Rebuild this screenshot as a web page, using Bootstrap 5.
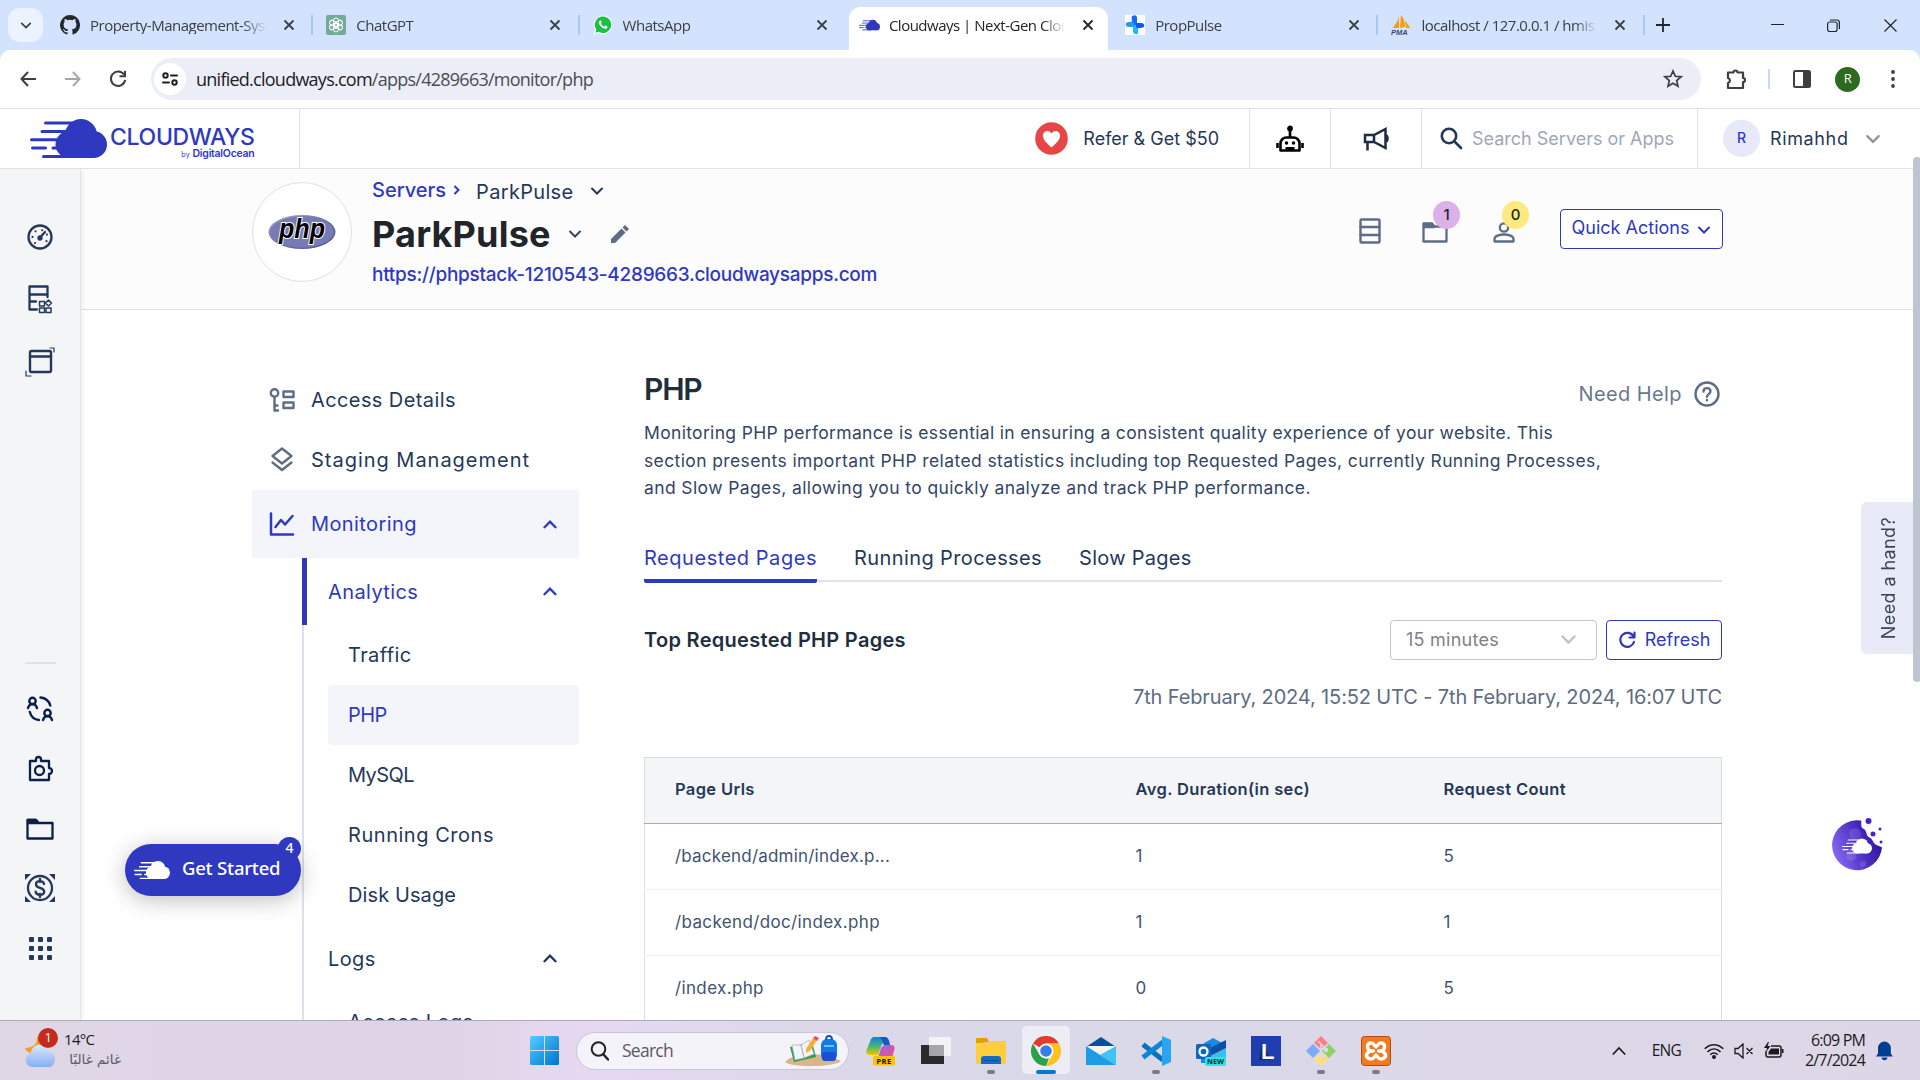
<!DOCTYPE html>
<html lang="en">
<head>
<meta charset="utf-8">
<title>Cloudways | Next-Gen Cloud Hosting</title>
<link href="https://cdn.jsdelivr.net/npm/bootstrap@5.3.0/dist/css/bootstrap.min.css" rel="stylesheet">
<style>
:root{--cw:#2f39bf;--navy:#253858;--slate:#5e6c8a;--line:#dfe1e6}
html,body{height:1080px;width:1920px;overflow:hidden}
body{font-family:Inter,"Noto Sans",sans-serif;color:var(--navy);background:#fff;letter-spacing:.02em;font-size:20px;line-height:1.2}
svg{display:block;flex:none}
.ic{fill:none;stroke:currentColor;stroke-width:2;stroke-linecap:round;stroke-linejoin:round}
.sys{font-family:"Open Sans","Noto Sans",sans-serif;letter-spacing:-.033em}
.nw{white-space:nowrap}
/* browser chrome */
.tabstrip{height:50px;background:#d3e2fd;color:#3c4043;font-size:15px}
.tab-menu{width:35px;height:34px;border-radius:12px;background:#edf3fe;margin:8px 3px 0 8px}
.btab{width:266.3px;padding-left:14px;height:50px;position:relative}
.btab:not(.active):not(.nosep)::after{content:"";position:absolute;right:-1px;top:15px;width:2px;height:20px;background:#a8c7fa}
.btab .ttl{width:178px;margin-left:10px;overflow:hidden;-webkit-mask-image:linear-gradient(90deg,#000 86%,transparent 99%);mask-image:linear-gradient(90deg,#000 86%,transparent 99%)}
.btab.active::before{content:"";position:absolute;inset:7px 3px 0 4px;background:#fff;border-radius:12px 12px 0 0;z-index:0}
.btab.active>*{position:relative}
.btab .x{margin-left:15px}
.toolbar{height:59px;border-bottom:1px solid #dcdfe6;background:#fff;color:#3c4043;border-radius:10px 10px 0 0}
.omni{height:42px;width:1550px;border-radius:21px;background:#ebeef7;padding-left:3px;padding-right:18px}
.site{width:32px;height:32px;border-radius:50%;background:#fff}
.url{font-size:18px;margin-left:10px;color:#4a4d51;letter-spacing:-.0415em;padding-top:1px}
.url b{font-weight:400;color:#1f2023}
/* app header */
.apphead{height:60px;border-bottom:1px solid var(--line);padding-right:6px}
.apphead>div{border-right:1px solid var(--line);height:59px}
.brand{width:300px;padding-left:30px;color:var(--cw)}
.brand .nm{font-size:23px;font-weight:500;line-height:24px;letter-spacing:-.014em}
.brand .by{font-size:7px;line-height:10px}
.brand .by b{font-size:10.5px;font-weight:600;letter-spacing:-.025em}
.t18{font-size:18px;letter-spacing:0}
/* body */
.appbody{height:851px;overflow:hidden}
.rail{width:81px;margin-right:-1px;background:#f3f5f7;border-right:1px solid #e1e4e8;box-shadow:2px 0 4px rgba(0,0,0,.06);z-index:2}
.rail>div{width:80px;display:flex;justify-content:center;align-items:center}
.subhead{height:141px;background:#fcfcfc;border-bottom:1px solid #dcdfe4;padding-left:172px}
.phpc{width:100px;height:100px;border:1px solid #e0e0e8;border-radius:50%;background:#fff;margin-top:13px}
.crumb-row{height:24px}
.app-name{font-size:36px;font-weight:700;line-height:40px;color:#212529;letter-spacing:.005em}
.cblue{color:var(--cw)}
.app-url{font-size:19px;font-weight:450;letter-spacing:-.0145em;line-height:24px}
.bub{position:absolute;width:27px;height:28px;border-radius:50%;font-size:15px;font-weight:500;color:#212529;letter-spacing:0}
.cbtn{border:1px solid var(--cw);color:var(--cw);border-radius:4px;font-size:18px;letter-spacing:0;padding:0;height:40px;background:#fff}
.side{width:327px;margin-left:172px;padding-top:60px;color:#253858}
.side .mi{height:60px;padding-left:17px}
.side .mi .lb{margin-left:16px}
.side .mon{height:68px;background:#f4f5fb;border-radius:4px;color:var(--cw)}
.tree{margin-left:50px;border-left:2px solid #dfe0ea;padding-left:24px;width:277px}
.tree .hd{height:67px;padding-right:21px}
.tree .lf{height:60px;padding-left:20px;display:flex;align-items:center;border-radius:4px}
.tree .hd.on{color:var(--cw);position:relative}
.tree .hd.on::before{content:"";position:absolute;left:-26px;top:0;width:5px;height:67px;background:var(--cw)}
.main{width:1078px;margin-left:65px;padding-top:60px}
.h-php{font-size:30px;font-weight:600;line-height:38px;color:#1f2d3d;letter-spacing:-.04em}
.desc{font-size:17.5px;line-height:27.6px;color:#344563;letter-spacing:.022em;margin-top:11px}
.desc .l1{letter-spacing:.0188em}
.mtabs{border-bottom:2px solid #e2e3ea;height:44px;margin-top:36px;gap:37px;letter-spacing:.027em}
.mtabs>div{height:45px;padding-top:8px}
.mtabs .on{color:var(--cw);border-bottom:4px solid var(--cw);border-radius:2px}
.sel{width:207px;height:40px;border:1px solid #c1c7d0;border-radius:4px;font-size:18px;color:#7e8287;padding:0 19px 0 15px;letter-spacing:.014em}
.daterange{color:#5e6c84;letter-spacing:-.0066em;margin-top:25px}
.ptable{border:1px solid #d9dce2;border-bottom:0;margin-top:48px;table-layout:fixed;letter-spacing:.018em}
.ptable th{height:66px;padding:0 0 0 30px;background:#f3f5f7!important;font-size:16.5px;font-weight:600;color:var(--navy);border-bottom:1px solid #a5adba;vertical-align:middle}
.ptable td{height:66px;padding:0 0 0 30px;font-size:17px;color:#42526e;border-bottom:1px solid #eff0f3;vertical-align:middle}
.ptable th+th,.ptable td+td{padding-left:0}
.scrollb{position:absolute;left:1913px;top:109px;width:7px;height:911px;background:#fff}
.scrollb::after{content:"";position:absolute;top:48px;left:0;width:8px;height:525px;border-radius:4px;background:#bfc5d0}
.hand{position:absolute;left:1861px;top:502px;width:52px;height:152px;background:#e8eaf7;border-radius:6px 0 0 6px;font-size:18px;color:#3b4757;padding-left:4px}
.hand span{writing-mode:vertical-rl;transform:rotate(180deg)}
.gs{position:absolute;left:125px;top:844px;width:176px;height:52px;border-radius:26px;background:var(--cw);color:#fff;box-shadow:0 4px 22px rgba(0,0,0,.25);font-family:"Noto Sans",sans-serif;font-weight:500;padding-left:9px;z-index:5;font-size:18.5px;letter-spacing:-.012em}
.gs .n{position:absolute;right:0;top:-7px;width:23px;height:23px;border-radius:50%;background:var(--cw);font-size:14px}
.cookie{position:absolute;left:1832px;top:817px}
/* taskbar */
.taskbar{height:60px;border-top:1px solid #aeacbb;background:linear-gradient(90deg,#dfd6e6 0,#dfd4e6 440px,#e7d8f2 590px,#dcd8ea 800px,#d9d9e8 1100px,#dcd8e8 1500px,#ddd6e6 1920px);color:#1b1b1f}
.tk{width:55px;height:59px;display:flex;align-items:center;justify-content:center;position:relative}
.tk.run::after{content:"";position:absolute;bottom:6px;width:8px;height:4px;border-radius:2px;background:#7c7a83}
.tk.cur::after{content:"";position:absolute;bottom:6px;width:20px;height:4px;border-radius:2px;background:#0078d4}
.tk.cur::before{content:"";position:absolute;inset:5px 3px 6px 4px;border-radius:5px;background:#eeedf6}
.tk svg{position:relative}
.sbox{width:273px;height:38px;border-radius:19px;background:#f5f3fa;border:1px solid #cdc5d8;padding:0 6px 0 13px;margin-left:17px;font-size:17.5px;color:#5b5960}
.clock{font-size:16px;line-height:20px;letter-spacing:-.052em;text-align:right;padding-bottom:2px}
.wnum{position:absolute;left:14px;top:-4px;width:20px;height:20px;border-radius:50%;background:#c42b1c;color:#fff;font-size:13px}
</style>
<script src="https://cdn.jsdelivr.net/npm/bootstrap@5.3.0/dist/js/bootstrap.bundle.min.js"></script>
</head>
<body>
<svg width="0" height="0" class="position-absolute">
<defs>
<symbol id="cloud" viewBox="0 0 77 39"><g fill="currentColor"><circle cx="51" cy="16" r="16"/><circle cx="63.500" cy="25.500" r="13.500"/><circle cx="39" cy="25.500" r="13.500"/><path d="M35 18l10-6 15 10 3 17H39z"/></g><path d="M15.500 4H44M12 12.400h30M1.500 20.700h30M2.500 29h13M23 29h8M13.500 37.400H40" stroke="currentColor" stroke-width="3" stroke-linecap="round" fill="none"/></symbol>
<symbol id="x" viewBox="0 0 12 12"><path d="M1.500 1.500l9 9M10.500 1.500l-9 9" stroke="currentColor" stroke-width="1.800"/></symbol>
<symbol id="dn" viewBox="0 0 14 10"><path d="M2 2.500l5 5 5-5" fill="none" stroke="currentColor" stroke-width="2" stroke-linecap="round"/></symbol>
<symbol id="up" viewBox="0 0 14 10"><path d="M2 7.500l5-5 5 5" fill="none" stroke="currentColor" stroke-width="2.200" stroke-linecap="round"/></symbol>
</defs>
</svg>

<div class="tabstrip d-flex sys">
  <div class="tab-menu d-flex align-items-center justify-content-center"><svg width="12" height="9"><use href="#dn"/></svg></div>
  <div class="btab d-flex align-items-center nw"><svg width="20" height="20" viewBox="0 0 16 16"><path fill="#24292f" d="M8 0a8 8 0 0 0-2.530 15.590c.4.070.55-.17.55-.38l-.01-1.490c-2.010.37-2.530-.49-2.690-.94-.09-.23-.48-.94-.82-1.130-.28-.15-.68-.52-.01-.53.63-.01 1.080.58 1.230.82.72 1.210 1.870.87 2.330.66.07-.52.28-.87.51-1.070-1.780-.2-3.640-.89-3.640-3.950 0-.87.31-1.590.82-2.150-.08-.2-.36-1.020.08-2.120 0 0 .67-.21 2.200.82a7.600 7.600 0 0 1 4 0c1.530-1.040 2.200-.82 2.200-.82.44 1.100.16 1.920.08 2.120.51.56.82 1.270.82 2.150 0 3.070-1.870 3.750-3.650 3.950.29.25.54.73.54 1.480l-.01 2.200c0 .21.150.46.55.38A8 8 0 0 0 8 0"/></svg><div class="ttl">Property-Management-Sys</div><svg class="x" width="12" height="12"><use href="#x"/></svg></div>
  <div class="btab d-flex align-items-center nw"><svg width="20" height="20" viewBox="0 0 20 20"><rect width="20" height="20" rx="2" fill="#74aa9c"/><g fill="none" stroke="#fff" stroke-width="1"><rect x="7.500" y="3" width="5" height="8.500" rx="2.500"/><rect x="7.500" y="3" width="5" height="8.500" rx="2.500" transform="rotate(60 10 10)"/><rect x="7.500" y="3" width="5" height="8.500" rx="2.500" transform="rotate(120 10 10)"/><rect x="7.500" y="3" width="5" height="8.500" rx="2.500" transform="rotate(180 10 10)"/><rect x="7.500" y="3" width="5" height="8.500" rx="2.500" transform="rotate(240 10 10)"/><rect x="7.500" y="3" width="5" height="8.500" rx="2.500" transform="rotate(300 10 10)"/></g></svg><div class="ttl">ChatGPT</div><svg class="x" width="12" height="12"><use href="#x"/></svg></div>
  <div class="btab nosep d-flex align-items-center nw"><svg width="20" height="20" viewBox="0 0 20 20"><path d="M10 .5a9.300 9.300 0 0 1 0 18.700 9.600 9.600 0 0 1-4.400-1.100L.8 19.400l1.300-4.700A9.300 9.300 0 0 1 10 .5z" fill="#fff"/><path d="M10 1.600a8.200 8.200 0 1 1-4.300 15.200l-3.300.9.900-3.200A8.200 8.200 0 0 1 10 1.600z" fill="#1bc143"/><path d="M6.900 5.400c.5-.3 1-.1 1.200.4l.6 1.400c.1.500-.9 1.100-.7 1.500.8 1.500 1.800 2.300 3.200 2.900.4.100.9-1.100 1.400-1l1.700.9c.6.400-.2 1.800-1 2.200-2.400 1-7.500-3.200-7.600-6.100 0-.9.500-1.800 1.200-2.200z" fill="#fff"/></svg><div class="ttl">WhatsApp</div><svg class="x" width="12" height="12"><use href="#x"/></svg></div>
  <div class="btab active d-flex align-items-center nw"><svg width="21" height="12" style="color:var(--cw)"><use href="#cloud"/></svg><div class="ttl text-dark" style="margin-left:9px">Cloudways | Next-Gen Clou</div><svg class="x text-dark" width="12" height="12"><use href="#x"/></svg></div>
  <div class="btab d-flex align-items-center nw"><svg width="20" height="20" viewBox="0 0 20 20"><path fill="#fff" d="M0 0h20v20H0z"/><path fill="#1668f5" d="M7 1q4-2 5 1v8H8Q6 5 7 1z"/><path fill="#22b6fb" d="M8 10h4q2 4 1 9-4 1-5-2z"/><path fill="#1e9dfa" d="M1 8q4-2 8-.5V12H4q-4 0-3-4z"/><path fill="#1558e8" d="M11 8h6q3 1 2 4-4 2-8 .5z"/></svg><div class="ttl">PropPulse</div><svg class="x" width="12" height="12"><use href="#x"/></svg></div>
  <div class="btab d-flex align-items-center nw"><svg width="20" height="20" viewBox="0 0 20 20"><path fill="#f89c0e" d="M8 1v12H2C4 9 7 7 8 1zM10 0c3 3 4 8 4 12l-5 1zM14 6c2 2 4 4 5 7h-4z"/><text x="0" y="19.500" font-size="7.500" font-weight="700" font-style="italic" fill="#444477" letter-spacing="0" font-family="Liberation Sans">PMA</text></svg><div class="ttl">localhost / 127.0.0.1 / hmis</div><svg class="x" width="12" height="12"><use href="#x"/></svg></div>
  <div class="d-flex align-items-center text-dark flex-grow-1" style="padding-left:12px">
    <svg width="14" height="14" stroke="currentColor" stroke-width="1.800"><path d="M7 0v14M0 7h14"/></svg>
    <svg width="13" height="14" class="ms-auto" stroke="currentColor"><path d="M0 6.500h13"/></svg>
    <svg width="13" height="13" style="margin-left:43px" fill="none" stroke="currentColor" stroke-width="1.200"><rect x=".6" y="3" width="9.500" height="9.500" rx="2"/><path d="M3 1h7a2.400 2.400 0 0 1 2.400 2.400V10"/></svg>
    <svg width="13" height="13" style="margin:0 23px 0 44px" stroke="currentColor" stroke-width="1.200"><path d="M.5.500l12 12M12.500.500l-12 12"/></svg>
  </div>
</div>
<div style="background:#d3e2fd"><div class="toolbar d-flex align-items-center">
  <svg width="16" height="16" style="margin-left:20px" fill="none" stroke="currentColor" stroke-width="2"><path d="M16 8H1.500M8 1L1.500 8 8 15"/></svg>
  <svg width="16" height="16" style="margin-left:29px" fill="none" stroke="#a5a8ab" stroke-width="2"><path d="M0 8h14.500M8 1l6.500 7L8 15"/></svg>
  <svg width="18" height="18" style="margin-left:28px" fill="none" stroke="currentColor" stroke-width="2"><path d="M15 4.500A7.200 7.200 0 1 0 16.200 10M16 .8v5.500h-5.500"/></svg>
  <div class="omni d-flex align-items-center sys" style="margin-left:24px">
    <div class="site d-flex align-items-center justify-content-center"><svg width="16" height="14" class="ic" style="color:#1f2023"><circle cx="3.500" cy="3.500" r="2.200"/><path d="M9 3.500h6M1 10.500h6"/><circle cx="12.500" cy="10.500" r="2.200"/></svg></div>
    <div class="url nw"><b>unified.cloudways.com</b>/apps/4289663/monitor/php</div>
    <svg class="ms-auto" width="20" height="20" fill="none" stroke="currentColor" stroke-width="1.700"><path d="M10 2l2.300 5.300 5.700.5-4.300 3.800 1.300 5.700-5-3-5 3 1.300-5.700L2 7.800l5.700-.5z"/></svg>
  </div>
  <svg width="22" height="22" style="margin-left:25px" fill="none" stroke="currentColor" stroke-width="2.200" stroke-linejoin="round"><path d="M2 4.500h5.500a2 2 0 0 1 4 0H17v5.500a2 2 0 0 1 0 4V20H2v-5a2.600 2.600 0 0 0 0-5z"/></svg>
  <div style="width:2px;height:20px;background:#c6dafc;margin-left:20px"></div>
  <svg width="18" height="18" style="margin-left:23px"><rect x="1" y="1" width="16" height="16" rx="1.500" fill="none" stroke="currentColor" stroke-width="2"/><path d="M10 1h7v16h-7z" fill="currentColor"/></svg>
  <div class="rounded-circle text-white d-flex align-items-center justify-content-center sys" style="width:25px;height:25px;background:#2c6a1e;font-size:13px;margin-left:24px">R</div>
  <svg width="4" height="18" style="margin-left:31px" fill="currentColor"><circle cx="2" cy="2" r="1.900"/><circle cx="2" cy="9" r="1.900"/><circle cx="2" cy="16" r="1.900"/></svg>
</div></div>

<div class="apphead d-flex">
  <div class="brand d-flex align-items-center">
    <svg width="77" height="39"><use href="#cloud"/></svg>
    <div style="margin-left:3px;padding-top:7px"><div class="nm nw">CLOUDWAYS</div><div class="by text-end nw">by <b>DigitalOcean</b></div></div>
  </div>
  <div class="flex-grow-1 d-flex align-items-center justify-content-end t18 nw" style="padding-right:30px"><svg width="33" height="33" style="margin-right:15px" viewBox="0 0 33 33"><circle cx="16.500" cy="16.500" r="16.300" fill="#e84646"/><path fill="#fff" d="M16.500 25.500C12 21.500 8 18 8 13.800 8 10.500 10.200 9 12.400 9c1.800 0 3.200 1 4.100 2.600C17.400 10 18.800 9 20.600 9c2.200 0 4.400 1.500 4.400 4.800 0 4.200-4 7.700-8.500 11.700z"/></svg>Refer &amp; Get $50</div>
  <div class="d-flex align-items-center justify-content-center text-black" style="width:81px"><svg width="28" height="28" fill="none" stroke="currentColor" stroke-width="2.600" stroke-linejoin="round"><path d="M4.500 25.500v-7a6 6 0 0 1 6-6h7a6 6 0 0 1 6 6v7zM14 12V4M1.500 18v5M26.500 18v5"/><circle cx="14" cy="3.500" r="1.600" fill="currentColor"/><circle cx="10.500" cy="18" r="1" fill="currentColor" stroke-width="1.500"/><circle cx="17.500" cy="18" r="1" fill="currentColor" stroke-width="1.500"/><path d="M9.500 22h9v3h-9z" fill="currentColor" stroke="none"/></svg></div>
  <div class="d-flex align-items-center justify-content-center" style="width:91px"><svg width="26" height="26" fill="none" stroke="currentColor" stroke-width="2.500" style="color:#1f2a44"><path d="M2 9h9L22.500 3v19L11 16H2zM11 9v7M4.500 16v8.500M22.500 9.500q2 0 2 3t-2 3"/></svg></div>
  <div class="d-flex align-items-center t18 nw" style="width:276px;padding-left:18px"><svg width="23" height="23" class="ic" style="stroke-width:2.600"><circle cx="9" cy="9" r="7.200"/><path d="M14.500 14.500l6.500 6.500"/></svg><span style="color:#9fa6b5;margin-left:9px">Search Servers or Apps</span></div>
  <div class="d-flex align-items-center t18" style="width:216px;padding-left:25px"><div class="rounded-circle d-flex align-items-center justify-content-center cblue" style="width:37px;height:37px;background:#e7e8f8;font-size:14px;font-weight:500">R</div><span style="margin-left:10px;letter-spacing:.035em">Rimahhd</span><svg width="16" height="12" style="margin-left:16px;color:#8993a4"><use href="#dn"/></svg></div>
</div>

<div class="appbody d-flex">
  <div class="rail d-flex flex-column flex-shrink-0">
    <div style="height:62px;margin-top:37px"><svg width="26" height="26" class="ic" style="stroke-width:2.300"><circle cx="13" cy="13" r="11.500"/><circle cx="13" cy="14" r="1.500" fill="currentColor"/><path d="M13.500 13l4.500-5"/><path stroke-dasharray="0 6.600" stroke-width="2.200" d="M8 19a7.500 7.500 0 1 1 10 0"/></svg></div>
    <div style="height:62px"><svg width="26" height="30" class="ic" style="stroke-width:2.300"><path d="M10 25.500H2.500V2.500H20.500V13M2.500 10.500h18M2.500 17.500H9"/><g stroke-width="1.500"><rect x="12.500" y="17.500" width="5" height="4.500"/><rect x="12.500" y="24" width="5" height="4.500"/><rect x="19" y="24" width="5" height="4.500"/><path d="M21.500 16l3 3-3 3-3-3z"/></g></svg></div>
    <div style="height:64px"><svg width="30" height="30" class="ic" style="stroke-width:2.400"><rect x="5" y="4" width="21" height="21" rx="1.500"/><path d="M5 9.500h21"/><path stroke-width="1.200" d="M25 1h4v4M1 24v5h5"/></svg></div>
    <div style="height:3px;margin-top:267px"><span style="width:31px;height:2px;background:#dfe1e6"></span></div>
    <div style="height:60px;margin-top:15px;color:#0b1f4b"><svg width="28" height="26" class="ic" style="stroke-width:2.400"><circle cx="6.500" cy="5" r="3.200"/><path d="M2 12c1-3 2.500-4 4.500-4s3.500 1 4.500 4"/><circle cx="21.500" cy="17" r="3.200"/><path d="M17 24c1-3 2.500-4 4.500-4s3.500 1 4.500 4M14.500 1.500c5 .5 8.500 3.500 9.800 8M13 24c-5-.5-8-3.500-9.200-8"/></svg></div>
    <div style="height:60px;color:#0b1f4b"><svg width="28" height="28" class="ic" style="stroke-width:2.300"><path d="M4 6h6V4.500a2.500 2.500 0 0 1 5 0V6h8v7a3 3 0 0 1 0 6v6H4z"/><circle cx="13.500" cy="15.500" r="4.500"/></svg></div>
    <div style="height:59px;color:#0b1f4b"><svg width="28" height="22" class="ic" style="stroke-width:2.300"><path d="M1.500 20V2H10l2.500 3H26.500v15.500h-25z"/><path d="M2 2h8l2 3H2z" fill="currentColor"/></svg></div>
    <div style="height:59px"><svg width="30" height="28" class="ic" style="stroke-width:2.300"><circle cx="15" cy="14" r="12"/><path d="M19 10c-.5-2-2-2.800-4-2.800-2.400 0-4 1.200-4 3.200 0 4.400 8.200 2.400 8.200 7 0 2-1.700 3.300-4.200 3.300-2.400 0-4-1-4.400-3M15 5v3M15 20v3"/><path fill="currentColor" stroke="none" d="M0 0h6L0 6zM30 0h-6l6 6zM0 28h6l-6-6zM30 28h-6l6-6z"/></svg></div>
    <div style="height:62px"><svg width="23" height="23" fill="currentColor"><g id="dots"><rect width="5" height="5" rx="1"/><rect x="9" width="5" height="5" rx="1"/><rect x="18" width="5" height="5" rx="1"/></g><use href="#dots" y="9"/><use href="#dots" y="18"/></svg></div>
  </div>

  <div class="flex-grow-1">
    <div class="subhead d-flex">
      <div class="phpc d-flex align-items-center justify-content-center"><svg width="68" height="36" viewBox="0 0 68 36"><defs><linearGradient id="pg" x1="0" y1="0" x2="1" y2="1"><stop offset="0" stop-color="#b4b7dc"/><stop offset=".4" stop-color="#777bb3"/><stop offset="1" stop-color="#484c89"/></linearGradient></defs><ellipse cx="34" cy="18" rx="33.500" ry="17" fill="url(#pg)"/><ellipse cx="34" cy="18" rx="32" ry="15.700" fill="#777bb3"/><text x="34" y="24" text-anchor="middle" font-family="Liberation Sans" font-weight="700" font-style="italic" font-size="27" textLength="46" lengthAdjust="spacingAndGlyphs" stroke="#fff" stroke-width="2" paint-order="stroke" letter-spacing="0">php</text></svg></div>
      <div style="margin-left:20px">
        <div class="crumb-row d-flex align-items-center" style="margin-top:9px;letter-spacing:0"><span class="cblue fw-medium">Servers</span><svg width="7" height="10" class="cblue" style="margin-left:7px" fill="none" stroke="currentColor" stroke-width="2"><path d="M1.500 1l4 4-4 4"/></svg><span style="margin:3px 0 0 16px;letter-spacing:.016em">ParkPulse</span><svg width="14" height="10" style="margin:2px 0 0 17px"><use href="#dn"/></svg></div>
        <div class="app-name d-flex align-items-center" style="margin-top:12px">ParkPulse<svg width="14" height="10" style="margin-left:17px;color:#344563"><use href="#dn"/></svg><svg width="18" height="18" viewBox="0 0 18 18" style="margin-left:29px" fill="#5e6c84"><path d="M0 18v-4L10.500 3.500l4 4L4 18zM11.500 2.500L14 0l4 4-2.500 2.500z"/></svg></div>
        <div class="cblue app-url" style="margin-top:9px">https://phpstack-1210543-4289663.cloudwaysapps.com</div>
      </div>
      <div class="ms-auto d-flex" style="margin-right:197px;color:#5e6c84">
        <svg width="22" height="26" class="ic" style="margin:49px 41px 0 0;stroke-width:2.400"><rect x="1.500" y="1.500" width="19" height="23" rx="1"/><path d="M1.500 9h19M1.500 17h19"/></svg>
        <div class="position-relative" style="margin:53px 45px 0 0"><svg width="26" height="21" class="ic" style="stroke-width:2.300"><path d="M1.500 19.500V1.500H10l2.500 3H24.500v15z"/><path d="M2 2h8l2 3H2z" fill="currentColor"/></svg><div class="bub d-flex align-items-center justify-content-center" style="left:11px;top:-21px;background:#dcb1ea">1</div></div>
        <div class="position-relative" style="margin:53px 45px 0 0"><svg width="22" height="21" class="ic" style="stroke-width:2.300"><circle cx="11" cy="5.500" r="4.200"/><path d="M1.500 19.500v-2.500c0-3 5-4.500 9.500-4.500s9.500 1.500 9.500 4.500v2.500z"/></svg><div class="bub d-flex align-items-center justify-content-center" style="left:9px;top:-21px;background:#fdea7f">0</div></div>
        <button class="btn cbtn d-flex align-items-center justify-content-center nw" style="width:163px;margin-top:40px;padding-bottom:3px">Quick Actions<svg width="14" height="10" style="margin:4px 0 0 8px"><use href="#dn"/></svg></button>
      </div>
    </div>
    <div class="d-flex">
      <div class="side flex-shrink-0">
        <div class="mi d-flex align-items-center"><svg width="26" height="24" class="ic" style="color:#5e6c84;stroke-width:2.400"><circle cx="5.500" cy="5" r="3.700"/><path d="M5.500 9v13.500M5.500 22.500h3.500M5.500 17.500h3"/><rect x="14.500" y="3.500" width="10" height="5.500"/><rect x="14.500" y="14.500" width="10" height="5.500"/></svg><span class="lb">Access Details</span></div>
        <div class="mi d-flex align-items-center"><svg width="26" height="26" class="ic" style="color:#5e6c84;stroke-width:2.300"><path d="M13 1.500l9.500 7.500L13 16.500 3.500 9zM3.500 15.500L13 23l9.500-7.500"/></svg><span class="lb" style="letter-spacing:.049em">Staging Management</span></div>
        <div class="mi mon d-flex align-items-center"><svg width="26" height="24" class="ic" style="stroke-width:2.500"><path d="M2 1.500v21h22M6.500 15l5.500-7 4 4.500L23.500 4"/></svg><span class="lb">Monitoring</span><svg width="16" height="11" class="ms-auto" style="margin-right:21px"><use href="#up"/></svg></div>
        <div class="tree">
          <div class="hd on d-flex align-items-center"><span>Analytics</span><svg width="16" height="11" class="ms-auto"><use href="#up"/></svg></div>
          <div class="lf">Traffic</div>
          <div class="lf cblue" style="background:#f4f5fb;letter-spacing:-.03em">PHP</div>
          <div class="lf" style="letter-spacing:-.03em">MySQL</div>
          <div class="lf" style="letter-spacing:.027em">Running Crons</div>
          <div class="lf" style="letter-spacing:.005em">Disk Usage</div>
          <div class="hd d-flex align-items-center"><span>Logs</span><svg width="16" height="11" class="ms-auto"><use href="#up"/></svg></div>
          <div class="lf">Access Logs</div>
        </div>
      </div>
      <div class="main">
        <div class="d-flex justify-content-between"><div class="h-php">PHP</div><div class="d-flex align-items-center" style="color:#6b778c;padding-top:10px">Need Help<svg width="26" height="26" class="ic" style="margin:0 2px 0 12px;color:#5e6c84;stroke-width:2.400"><circle cx="13" cy="13" r="11.500"/><path d="M9.500 10.500c0-4.500 7-4.500 7 0 0 2.600-3.500 2.700-3.500 5.200M13 19v.2"/></svg></div></div>
        <div class="desc nw"><span class="l1">Monitoring PHP performance is essential in ensuring a consistent quality experience of your website. This</span><br>section presents important PHP related statistics including top Requested Pages, currently Running Processes,<br>and Slow Pages, allowing you to quickly analyze and track PHP performance.</div>
        <div class="mtabs d-flex"><div class="on">Requested Pages</div><div style="letter-spacing:.02em">Running Processes</div><div style="letter-spacing:.014em">Slow Pages</div></div>
        <div class="d-flex align-items-center" style="margin-top:38px"><div class="fw-semibold" style="color:#1f2d3d;letter-spacing:.015em">Top Requested PHP Pages</div>
          <div class="sel ms-auto d-flex align-items-center justify-content-between">15 minutes<svg width="17" height="13" style="color:#bfc2c6"><use href="#dn"/></svg></div>
          <button class="btn cbtn d-flex align-items-center justify-content-center" style="width:116px;margin-left:9px"><svg width="18" height="18" class="ic" style="margin-right:9px;stroke-width:2.200"><path d="M15.500 5.500A7 7 0 1 0 16 11M16.500 1.500v5h-5"/></svg>Refresh</button></div>
        <div class="daterange text-end nw">7th February, 2024, 15:52 UTC - 7th February, 2024, 16:07 UTC</div>
        <table class="table ptable mb-0 nw"><colgroup><col style="width:491px"><col style="width:308px"><col></colgroup>
          <thead><tr><th>Page Urls</th><th>Avg. Duration(in sec)</th><th>Request Count</th></tr></thead>
          <tbody><tr><td style="letter-spacing:.012em">/backend/admin/index.p...</td><td>1</td><td>5</td></tr><tr><td>/backend/doc/index.php</td><td>1</td><td>1</td></tr><tr><td>/index.php</td><td>0</td><td>5</td></tr></tbody></table>
      </div>
    </div>
  </div>
</div>

<div class="taskbar d-flex align-items-center sys">
  <div class="position-relative" style="margin-left:24px"><svg width="32" height="38" viewBox="0 0 32 38"><defs><linearGradient id="cl" x1="0" y1="0" x2="0" y2="1"><stop offset="0" stop-color="#dbe9fb"/><stop offset="1" stop-color="#86aef0"/></linearGradient></defs><path d="M13 3c1 8-3 13-12 13 3 7 13 8 18 0z" fill="#f3a01c"/><path d="M8 35a7.500 7.500 0 0 1-1-14.500C8 11 22 10 24 19.500 34 20 33 35 24 35z" fill="url(#cl)"/></svg><div class="wnum d-flex align-items-center justify-content-center">1</div></div>
  <div style="margin-left:8px;font-size:15px;line-height:20px;padding-bottom:3px"><div>14°C</div><div dir="rtl" style="width:57px;color:#5e5b66;letter-spacing:0;font-size:13.5px;font-family:'DejaVu Sans',sans-serif" class="nw">غائم غالبًا</div></div>
  <svg width="29" height="29" viewBox="0 0 29 29" style="margin-left:409px"><defs><linearGradient id="wg" x1="0" y1="0" x2="1" y2="1"><stop offset="0" stop-color="#4fd0fd"/><stop offset="1" stop-color="#0072cf"/></linearGradient></defs><path fill="url(#wg)" d="M0 1.500Q0 0 1.500 0H14v14H0zM15 0h12.500Q29 0 29 1.500V14H15zM0 15h14v14H1.500Q0 29 0 27.500zM15 15h14v12.500Q29 29 27.500 29H15z"/></svg>
  <div class="sbox d-flex align-items-center"><svg width="19" height="20" class="ic" style="color:#222"><circle cx="8.500" cy="8" r="6.800"/><path d="M13.500 13.500L18 18.500" stroke-width="2.500"/></svg><span style="margin-left:13px;letter-spacing:-.042em">Search</span>
    <svg class="ms-auto" width="58" height="32" viewBox="0 0 58 32"><path d="M1 27Q10 18 28 19T57 26Q50 31 28 31T1 27z" fill="#d9b48d"/><path d="M6 12l22-5 4 15-22 5z" fill="#2e9e4c"/><path d="M8 10l9 0 3 13-9 2zM17 10l8-5 5 14-10 4z" fill="#f2f4fb" stroke="#aab" stroke-width=".7"/><path d="M22 14L29 3l4 2-7 11-4 2z" fill="#f5b03a"/><path d="M29 3l2-2 4 2-2 3z" fill="#e8506a"/><rect x="37" y="4" width="16" height="22" rx="6" fill="#1479e8"/><path d="M42 5q0-4 3-4t3 4" fill="none" stroke="#1456b8" stroke-width="2"/><rect x="38" y="17" width="14" height="9" rx="3" fill="#1a4fd0"/><path d="M40 11h10" stroke="#63c2ff" stroke-width="2"/></svg></div>
  <div class="tk" style="margin-left:4px"><svg width="30" height="30" viewBox="0 0 30 30"><defs><linearGradient id="co" x1="0" y1="0" x2="0" y2="1"><stop offset="0" stop-color="#1f77e0"/><stop offset=".5" stop-color="#3db87a"/><stop offset="1" stop-color="#f5c400"/></linearGradient><linearGradient id="cp" x1="0" y1="0" x2="1" y2="1"><stop offset="0" stop-color="#9a5cf0"/><stop offset="1" stop-color="#f3567f"/></linearGradient></defs><path d="M7 1h12q3 0 4 7h-7l-4 11H3q-4-1-2-6L5 3z" fill="url(#co)"/><path d="M13 1h7q3 1 4 8h-6q-2-7-5-8z" fill="#1a56c8"/><path d="M18 9h8q4 1 2 6l-2 7H12l3-10z" fill="url(#cp)"/><rect x="7" y="20" width="22" height="9.500" rx="2" fill="#fcc200"/><text x="18" y="27.600" text-anchor="middle" font-size="7.500" font-weight="700" fill="#111" letter-spacing=".4" font-family="Noto Sans">PRE</text></svg></div>
  <div class="tk"><svg width="30" height="29" viewBox="0 0 30 29"><path fill="#2b2b2b" d="M0 9h23v19H0z"/><path fill="#f3f3f3" d="M8 1h22v19H8z"/><path fill="#a6a6aa" d="M8 9h15v11H8z"/></svg></div>
  <div class="tk run"><svg width="30" height="28" viewBox="0 0 30 28"><path fill="#e0a000" d="M0 2q0-1 1-1h10l2 4h-2L0 7z"/><path fill="#fdcd3c" d="M0 6h11l2-2h17v23H0z"/><path fill="#0f6dc4" d="M5 27v-5q0-3 3-3h14q3 0 3 3v5z"/><path stroke="#0a4a8c" d="M8 23.500h14"/></svg></div>
  <div class="tk cur"><svg width="30" height="30" viewBox="0 0 30 30"><path fill="#e33b2e" d="M15 15L2 7.500A15 15 0 0 1 28 7.500H15z"/><path fill="#fcc31e" d="M15 7.500h13A15 15 0 0 1 15 30l6.500-11.300z"/><path fill="#2da04a" d="M2 7.500l6.500 11.200L15 22.500l3 0L15 30A15 15 0 0 1 2 7.500z"/><circle cx="15" cy="15" r="7.400" fill="#fff"/><circle cx="15" cy="15" r="5.800" fill="#3a7cec"/></svg></div>
  <div class="tk"><svg width="30" height="30" viewBox="0 0 30 30"><path fill="#0a4f9e" d="M0 11L15 1l15 10z"/><path fill="#f4f4f6" d="M0 10h30L15 21z"/><path fill="#1d9be4" d="M0 10l30 19H0z"/><path fill="#41c3f4" d="M30 10v19L14 19z"/></svg></div>
  <div class="tk run"><svg width="30" height="30" viewBox="0 0 30 30"><path fill="none" stroke="#0a72bd" stroke-width="5" d="M2 8.500L22 24"/><path fill="none" stroke="#0e87d3" stroke-width="5" d="M2 21.500L22 6"/><path fill="#27a5f2" d="M21 0l9 4v22l-9 4z"/></svg></div>
  <div class="tk"><svg width="30" height="30" viewBox="0 0 30 30"><path fill="#1a8be0" d="M5 9l12-7 13 7v18H5z"/><path fill="#0f4fa8" d="M14 12L30 4v8l-14 9z"/><path fill="#38bdf5" d="M14 20l16-8v15H14z"/><rect y="8" width="15" height="15" rx="1.500" fill="#0f66bd"/><circle cx="7.500" cy="15.500" r="4" fill="none" stroke="#fff" stroke-width="2.300"/><rect x="9" y="21" width="21" height="9" rx="2" fill="#2ee3e0"/><text x="19.500" y="28.400" text-anchor="middle" font-size="7.200" font-weight="700" fill="#062f3a" letter-spacing="0" font-family="Noto Sans">NEW</text></svg></div>
  <div class="tk"><svg width="30" height="30"><path fill="#1f3fb0" d="M0 0h30v30H0z"/><path fill="#132b62" d="M11 7L8 24h12z"/><text x="10" y="22.500" font-size="22" font-weight="700" fill="#fff" letter-spacing="0" font-family="Liberation Sans">L</text></svg></div>
  <div class="tk run"><svg width="30" height="30" viewBox="0 0 30 30"><path fill="#fb8080" d="M15 0l7 7-7 6-7-6z"/><path fill="#7cabfb" d="M7 8l7 7-7 7-7-7z"/><path fill="#8fd163" d="M23 8l7 7-7 7-7-7z"/><path fill="#fbe07a" d="M15 16l7 7-7 7-7-7z"/><g stroke="#dcdae8" stroke-width="1.500" fill="#dcdae8"><path d="M12 5l8 8M15 9v12"/><circle cx="15" cy="20" r="1.500"/><circle cx="20" cy="14" r="1.500"/></g></svg></div>
  <div class="tk run"><svg width="30" height="30" viewBox="0 0 30 30"><rect x=".5" y=".5" width="29" height="29" rx="3" fill="#f47a20" stroke="#a85018"/><g fill="none" stroke="#fff" stroke-width="3.400" stroke-linecap="round" stroke-linejoin="round"><path d="M12.500 15H9Q6 13 6.500 9.500 8 6 12 7.500l3 3.500 3-3.500q4-1.500 5.500 2Q24 13 21 15h-3.500"/><path d="M9 15q-4 2-3.500 5.500Q8 24 12 22.500l3-3.500 3 3.500q4 1.500 6.500-2Q25 17 21 15"/></g></svg></div>
  <div class="d-flex align-items-center ms-auto" style="padding-right:27px">
    <svg width="14" height="10" fill="none" stroke="currentColor" stroke-width="1.700"><path d="M.8 8.500L7 2l6.200 6.500"/></svg>
    <span style="margin-left:26px;font-size:15.500px;letter-spacing:-.05em">ENG</span>
    <svg width="20" height="16" style="margin-left:23px" fill="none" stroke="currentColor" stroke-width="1.600"><path d="M.7 5.800c5.500-5.500 13-5.500 18.600 0M3.500 8.800c4-3.800 9-3.800 13 0M6.300 11.700c2.200-2 5.200-2 7.400 0"/><circle cx="10" cy="14" r="1.200" fill="currentColor"/></svg>
    <svg width="20" height="16" style="margin-left:10px" fill="none" stroke="currentColor" stroke-width="1.300"><path d="M1 5.500h3L9 1v14l-5-4.500H1zM12.500 5l6 6M18.500 5l-6 6"/></svg>
    <svg width="21" height="18" style="margin-left:10px" fill="none" stroke="currentColor" stroke-width="1.500"><path d="M7 4h8q2 0 2 2v7q0 2-2 2H4q-2 0-2-2V9"/><path d="M7 6.500h8v6H4.500V10zM18 7h1.500v4H18z" fill="currentColor" stroke="none"/><path d="M4 0L0 6h3l-1 4 4.500-6h-3L5 0z" fill="currentColor" stroke="none"/></svg>
    <div class="clock nw" style="margin-left:20px"><div>6:09 PM</div><div>2/7/2024</div></div>
    <svg width="17" height="20" style="margin-left:11px" fill="#003e92"><path d="M0 15.500l2-3V7a6.200 6.200 0 0 1 12.800 0v5.500l2 3zM5.500 16.500h6q-.5 2.800-3 2.800t-3-2.800z"/></svg>
  </div>
</div>

<div class="scrollb"></div>
<div class="hand d-flex align-items-center justify-content-center nw"><span>Need a hand?</span></div>
<div class="gs d-flex align-items-center nw"><svg width="36" height="20"><use href="#cloud"/></svg><span style="margin-left:12px;padding-bottom:3px">Get Started</span><div class="n d-flex align-items-center justify-content-center">4</div></div>
<svg class="cookie" width="52" height="54" viewBox="0 0 52 54"><defs><linearGradient id="ck" x1="0" y1=".6" x2="1" y2=".2"><stop offset="0" stop-color="#8468f2"/><stop offset=".55" stop-color="#4b2cc0"/><stop offset="1" stop-color="#2a0c94"/></linearGradient></defs><path fill="url(#ck)" d="M29 3.500c1 2-1 6 2 8 4 2 3 6 5 8 3 2 4 2 5 5 2 4 6 4 9 6A25 25 0 1 1 29 3.500z"/><g fill="#fff" opacity=".12"><circle cx="23" cy="17" r="6"/><circle cx="19" cy="39" r="5"/><circle cx="31" cy="47" r="3"/></g><g fill="#4a22c4"><circle cx="36.500" cy="4" r="3"/><circle cx="41" cy="17" r="2.500"/><circle cx="48" cy="12" r="1.500"/><circle cx="49" cy="25" r="1.500"/></g><svg x="10" y="21" width="30" height="16" style="color:#fff"><use href="#cloud"/></svg></svg>
</body>
</html>
